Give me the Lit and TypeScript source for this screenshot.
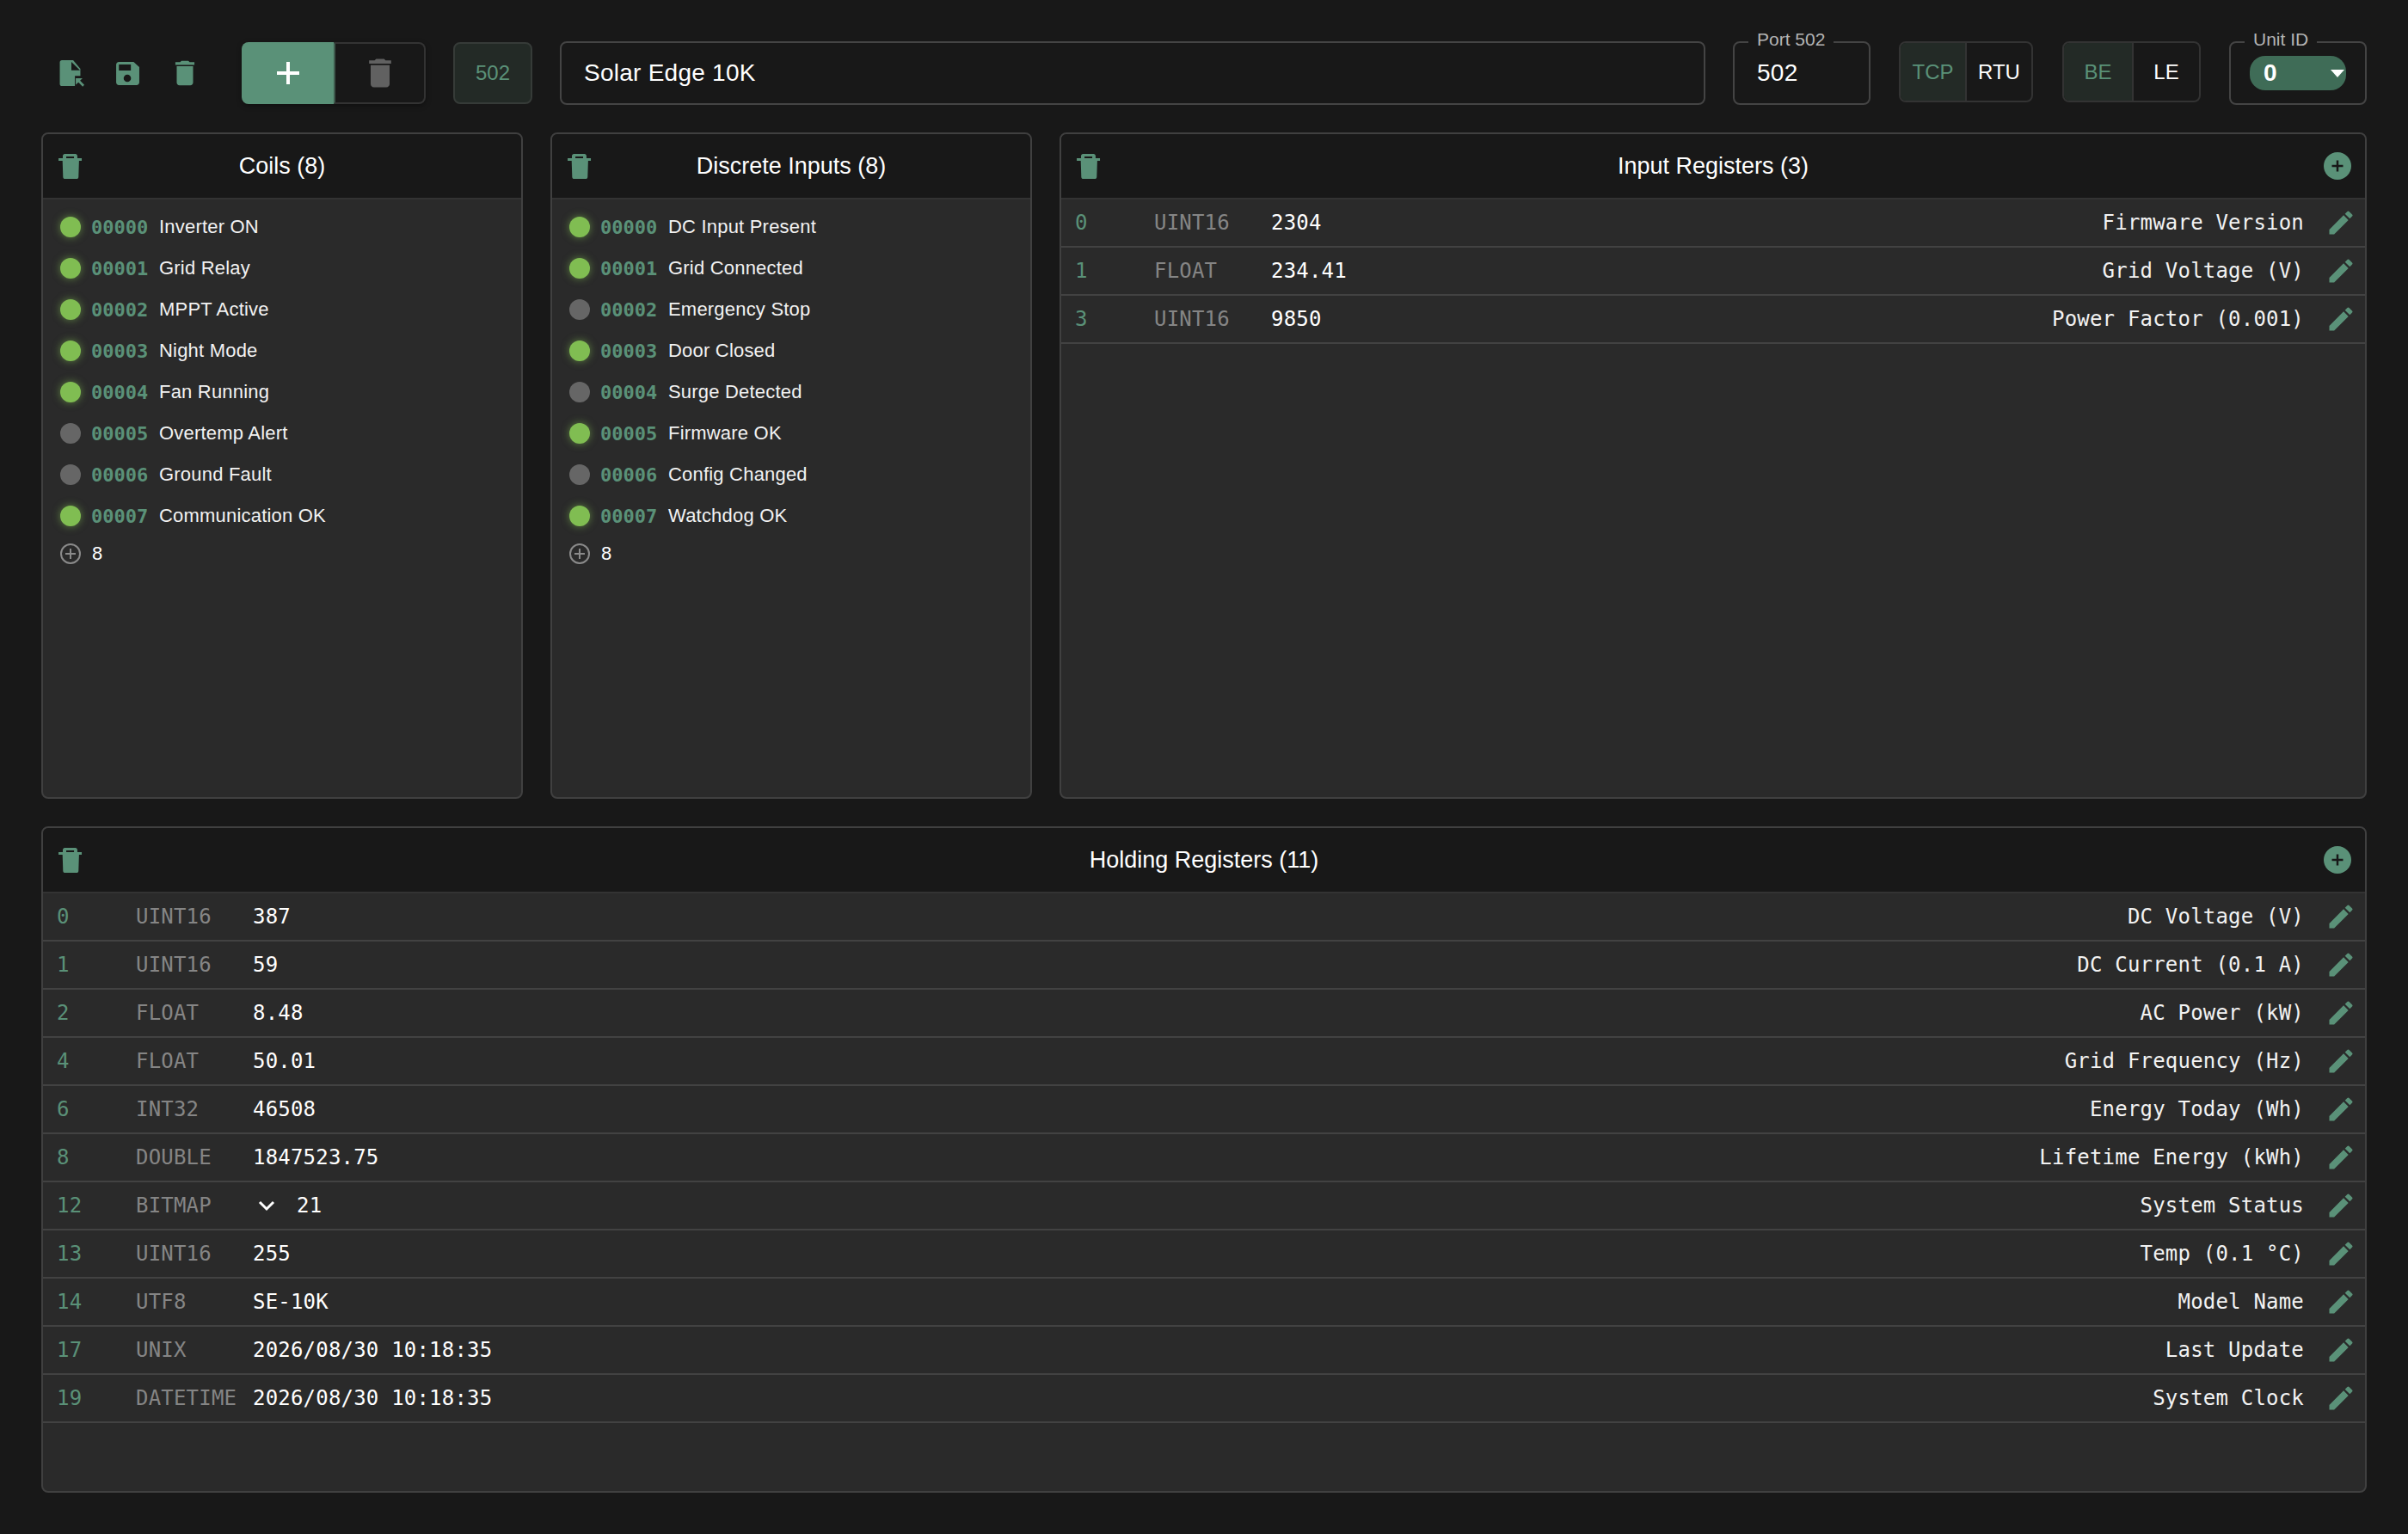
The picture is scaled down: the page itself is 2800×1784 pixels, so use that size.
import { LitElement, html, css, svg } from 'lit';
import { customElement } from 'lit/decorators.js';

interface Bit { label: string; on: boolean }
interface Reg { addr: number; type: string; value: string; label: string; expand?: boolean }

const coils: Bit[] = [
  { label: 'Inverter ON', on: true },
  { label: 'Grid Relay', on: true },
  { label: 'MPPT Active', on: true },
  { label: 'Night Mode', on: true },
  { label: 'Fan Running', on: true },
  { label: 'Overtemp Alert', on: false },
  { label: 'Ground Fault', on: false },
  { label: 'Communication OK', on: true },
];

const discrete: Bit[] = [
  { label: 'DC Input Present', on: true },
  { label: 'Grid Connected', on: true },
  { label: 'Emergency Stop', on: false },
  { label: 'Door Closed', on: true },
  { label: 'Surge Detected', on: false },
  { label: 'Firmware OK', on: true },
  { label: 'Config Changed', on: false },
  { label: 'Watchdog OK', on: true },
];

const inputRegs: Reg[] = [
  { addr: 0, type: 'UINT16', value: '2304', label: 'Firmware Version' },
  { addr: 1, type: 'FLOAT', value: '234.41', label: 'Grid Voltage (V)' },
  { addr: 3, type: 'UINT16', value: '9850', label: 'Power Factor (0.001)' },
];

const holdingRegs: Reg[] = [
  { addr: 0, type: 'UINT16', value: '387', label: 'DC Voltage (V)' },
  { addr: 1, type: 'UINT16', value: '59', label: 'DC Current (0.1 A)' },
  { addr: 2, type: 'FLOAT', value: '8.48', label: 'AC Power (kW)' },
  { addr: 4, type: 'FLOAT', value: '50.01', label: 'Grid Frequency (Hz)' },
  { addr: 6, type: 'INT32', value: '46508', label: 'Energy Today (Wh)' },
  { addr: 8, type: 'DOUBLE', value: '1847523.75', label: 'Lifetime Energy (kWh)' },
  { addr: 12, type: 'BITMAP', value: '21', label: 'System Status', expand: true },
  { addr: 13, type: 'UINT16', value: '255', label: 'Temp (0.1 °C)' },
  { addr: 14, type: 'UTF8', value: 'SE-10K', label: 'Model Name' },
  { addr: 17, type: 'UNIX', value: '2026/08/30 10:18:35', label: 'Last Update' },
  { addr: 19, type: 'DATETIME', value: '2026/08/30 10:18:35', label: 'System Clock' },
];

// 24 unit icons, all filled with currentColor
const icon = (size: number, body: unknown) => html`<svg class="ico" width=${size} height=${size} viewBox="0 0 24 24" fill="currentColor" fill-rule="evenodd">${body}</svg>`;
const TRASH = svg`<path d="M19 4h-3.500l-1-1h-5l-1 1H5v2h14V4zM6 19c0 1.100.9 2 2 2h8c1.100 0 2-.9 2-2V7H6v12z"/>`;
const TRASH_CAN = svg`<path d="M7.500 3.300h8.300c.8 0 1.500.7 1.500 1.500v1.900h3.400v2h-2.100l-.4 12.400c0 .9-.7 1.600-1.500 1.600H7.800c-.9 0-1.600-.7-1.600-1.600L5.800 8.700H2.700v-2H6V4.800c0-.8.7-1.500 1.500-1.500zM8.700 5.300v1.400h6V5.300z"/>`;
const FILE = svg`<path d="M5 2.500h8.300l5.300 6.300V14h-4v7.500H5c-.8 0-1.500-.7-1.500-1.500V4c0-.8.7-1.500 1.500-1.500zM12 3.800V10h6.300L12 3.800z"/><path d="M15.200 15.800h5l-1.800 1.800 3.100 3.100-1.200 1.200-3.100-3.100-2 1.800z"/>`;
const SAVE = svg`<path d="M5.200 3.800H16l4.200 3.800v11.200c0 1.100-.9 2-2 2h-13c-1.100 0-2-.9-2-2v-13c0-1.100.9-2 2-2zM5.200 5.700v4.400H14V5.700zM11.400 13.100a2.700 2.700 0 1 0 0 5.400 2.700 2.700 0 0 0 0-5.400z"/>`;
const PENCIL = svg`<path d="M3 17.250V21h3.750L17.810 9.940l-3.750-3.750L3 17.250zM20.710 7.040a1 1 0 0 0 0-1.410l-2.340-2.340a1 1 0 0 0-1.410 0l-1.830 1.830 3.750 3.750 1.830-1.830z"/>`;

@customElement('app-root')
export class AppRoot extends LitElement {
  static styles = css`
    :host {
      display: block;
      min-height: 1784px;
      box-sizing: border-box;
      padding: 48px;
      background: #181818;
      color: #fff;
      font-family: 'Liberation Sans', Arial, sans-serif;
    }
    .ico { display: block; flex: none; }

    /* top bar */
    .bar { display: flex; align-items: flex-start; gap: 32px; height: 74px; margin-bottom: 32px; }
    .tools { display: flex; align-items: center; width: 185px; height: 74px; margin-left: 16px; color: #5a9178; gap: 28px; }
    .split { display: flex; width: 214px; height: 72px; margin-top: 1px; border-radius: 8px; box-shadow: 0 2px 6px rgba(0, 0, 0, .35); }
    .add { width: 107px; display: flex; align-items: center; justify-content: center; background: #5a9178; border-radius: 8px 0 0 8px; }
    .del { flex: 1; display: flex; align-items: center; justify-content: center; color: #616161; border: 2px solid #333; border-left-color: #3e5a4d; border-radius: 0 8px 8px 0; }
    .port-badge { display: flex; align-items: center; justify-content: center; width: 92px; height: 72px; box-sizing: border-box; margin-top: 1px; background: #232a26; border: 2px solid #363b38; border-radius: 8px; color: #5a9178; font-size: 24px; }
    .field { position: relative; box-sizing: border-box; height: 74px; border: 2px solid #444; border-radius: 8px; display: flex; align-items: center; padding-left: 26px; font-size: 28px; letter-spacing: .25px; }
    .name { flex: 1; }
    .port { width: 160px; }
    .unit { width: 160px; padding-left: 22px; }
    .legend { position: absolute; top: -16px; left: 16px; padding: 0 10px; background: #181818; font-size: 21px; line-height: 24px; letter-spacing: 0; color: #b4b4b4; }
    .toggle { display: flex; height: 71px; margin: 0 1px; box-sizing: border-box; border: 2px solid #333; border-radius: 8px; font-size: 24px; overflow: hidden; }
    .toggle span { display: flex; align-items: center; justify-content: center; box-sizing: border-box; }
    .toggle .on { background: #232a26; color: #5a9178; border-right: 2px solid #333; }
    .select { width: 112px; height: 40px; box-sizing: border-box; padding: 0 0 0 16px; display: flex; align-items: center; justify-content: space-between; border-radius: 18px; background: #3f6c57; font-size: 28px; font-weight: 700; }
    .caret { width: 0; height: 0; margin-right: 2px; border: 8.5px solid transparent; border-top: 9px solid #fff; border-bottom: 0; }

    /* panels */
    .grid { display: grid; grid-template-columns: 560px 560px 1520px; grid-template-rows: 775px 775px; gap: 32px; }
    .panel { display: flex; flex-direction: column; min-width: 0; background: #2a2a2a; border: 2px solid #404040; border-radius: 8px; overflow: hidden; }
    .wide { grid-column: 1 / -1; }
    .head { position: relative; flex: none; height: 76px; box-sizing: border-box; display: flex; align-items: center; justify-content: center; background: #181818; border-bottom: 2px solid #333; font-size: 27px; }
    .head .trash { position: absolute; left: 14px; top: 18px; color: #5a9178; }
    .head .plus { position: absolute; right: 16px; top: 21px; width: 32px; height: 32px; display: flex; align-items: center; justify-content: center; border-radius: 50%; background: #5a9178; color: #181818; }

    .bits { padding: 8px 20px 0; }
    .bit { display: flex; align-items: center; height: 48px; font-size: 22px; letter-spacing: .2px; color: #f2f2f2; }
    .dot { flex: none; width: 24px; height: 24px; border-radius: 50%; background: #666; margin-right: 12px; }
    .dot.lit { background: #80bd52; box-shadow: 0 0 10px rgba(128, 189, 82, .6); }
    .id { width: 79px; flex: none; font-family: 'DejaVu Sans Mono', monospace; font-weight: 700; color: #5a9178; letter-spacing: 0; }
    .more { display: flex; align-items: center; height: 39px; font-size: 22px; }
    .more .circle { width: 24px; height: 24px; box-sizing: border-box; margin-right: 13px; display: flex; align-items: center; justify-content: center; border: 2px solid #8a8a8a; border-radius: 50%; color: #8a8a8a; }

    .reg { flex: none; display: flex; align-items: center; height: 56px; box-sizing: border-box; padding: 0 16px; border-bottom: 2px solid #424242; font-family: 'DejaVu Sans Mono', monospace; font-size: 24px; letter-spacing: .2px; }
    .addr { width: 92px; flex: none; color: #5a9178; }
    .type { width: 136px; flex: none; color: #858585; }
    .value { display: flex; align-items: center; color: #fff; }
    .chev { margin: 0 25px 0 6px; }
    .label { margin-left: auto; color: #f2f2f2; }
    .edit { margin-left: 25px; margin-right: -6px; color: #5a9178; }
  `;

  private bitPanel(title: string, bits: Bit[]) {
    return html`
      <section class="panel">
        <header class="head"><span class="trash">${icon(36, TRASH_CAN)}</span>${title}</header>
        <div class="bits">
          ${bits.map((b, i) => html`
            <div class="bit">
              <span class=${b.on ? 'dot lit' : 'dot'}></span>
              <span class="id">${String(i).padStart(5, '0')}</span>
              <span>${b.label}</span>
            </div>`)}
          <div class="more">
            <span class="circle"><svg width="14" height="14" viewBox="0 0 14 14" stroke="currentColor" stroke-width="2"><path d="M7 1v12M1 7h12"/></svg></span>
            <span>${bits.length}</span>
          </div>
        </div>
      </section>`;
  }

  private regPanel(title: string, regs: Reg[], wide = false) {
    return html`
      <section class=${wide ? 'panel wide' : 'panel'}>
        <header class="head">
          <span class="trash">${icon(36, TRASH_CAN)}</span>${title}
          <span class="plus"><svg width="14" height="14" viewBox="0 0 14 14" stroke="currentColor" stroke-width="2.500"><path d="M7 .5v13M.5 7h13"/></svg></span>
        </header>
        ${regs.map((r) => html`
          <div class="reg">
            <span class="addr">${r.addr}</span>
            <span class="type">${r.type}</span>
            <span class="value">
              ${r.expand ? html`<svg class="chev" width="20" height="20" viewBox="0 0 20 20" fill="none" stroke="currentColor" stroke-width="3"><path d="M2 6l8 8 8-8"/></svg>` : ''}${r.value}
            </span>
            <span class="label">${r.label}</span>
            <span class="edit">${icon(36, PENCIL)}</span>
          </div>`)}
      </section>`;
  }

  render() {
    return html`
      <div class="bar">
        <div class="tools">${icon(38, FILE)}${icon(38, SAVE)}${icon(38, TRASH)}</div>
        <div class="split">
          <span class="add"><svg width="26" height="26" viewBox="0 0 26 26" stroke="#fff" stroke-width="4"><path d="M13 0v26M0 13h26"/></svg></span>
          <span class="del">${icon(44, TRASH)}</span>
        </div>
        <div class="port-badge">502</div>
        <div class="field name">Solar Edge 10K</div>
        <div class="field port"><span class="legend">Port 502</span>502</div>
        <div class="toggle"><span class="on" style="width:77px">TCP</span><span style="width:75px">RTU</span></div>
        <div class="toggle"><span class="on" style="width:81px">BE</span><span style="width:76px">LE</span></div>
        <div class="field unit"><span class="legend">Unit ID</span><div class="select">0<span class="caret"></span></div></div>
      </div>
      <div class="grid">
        ${this.bitPanel('Coils (8)', coils)}
        ${this.bitPanel('Discrete Inputs (8)', discrete)}
        ${this.regPanel('Input Registers (3)', inputRegs)}
        ${this.regPanel('Holding Registers (11)', holdingRegs, true)}
      </div>`;
  }
}
